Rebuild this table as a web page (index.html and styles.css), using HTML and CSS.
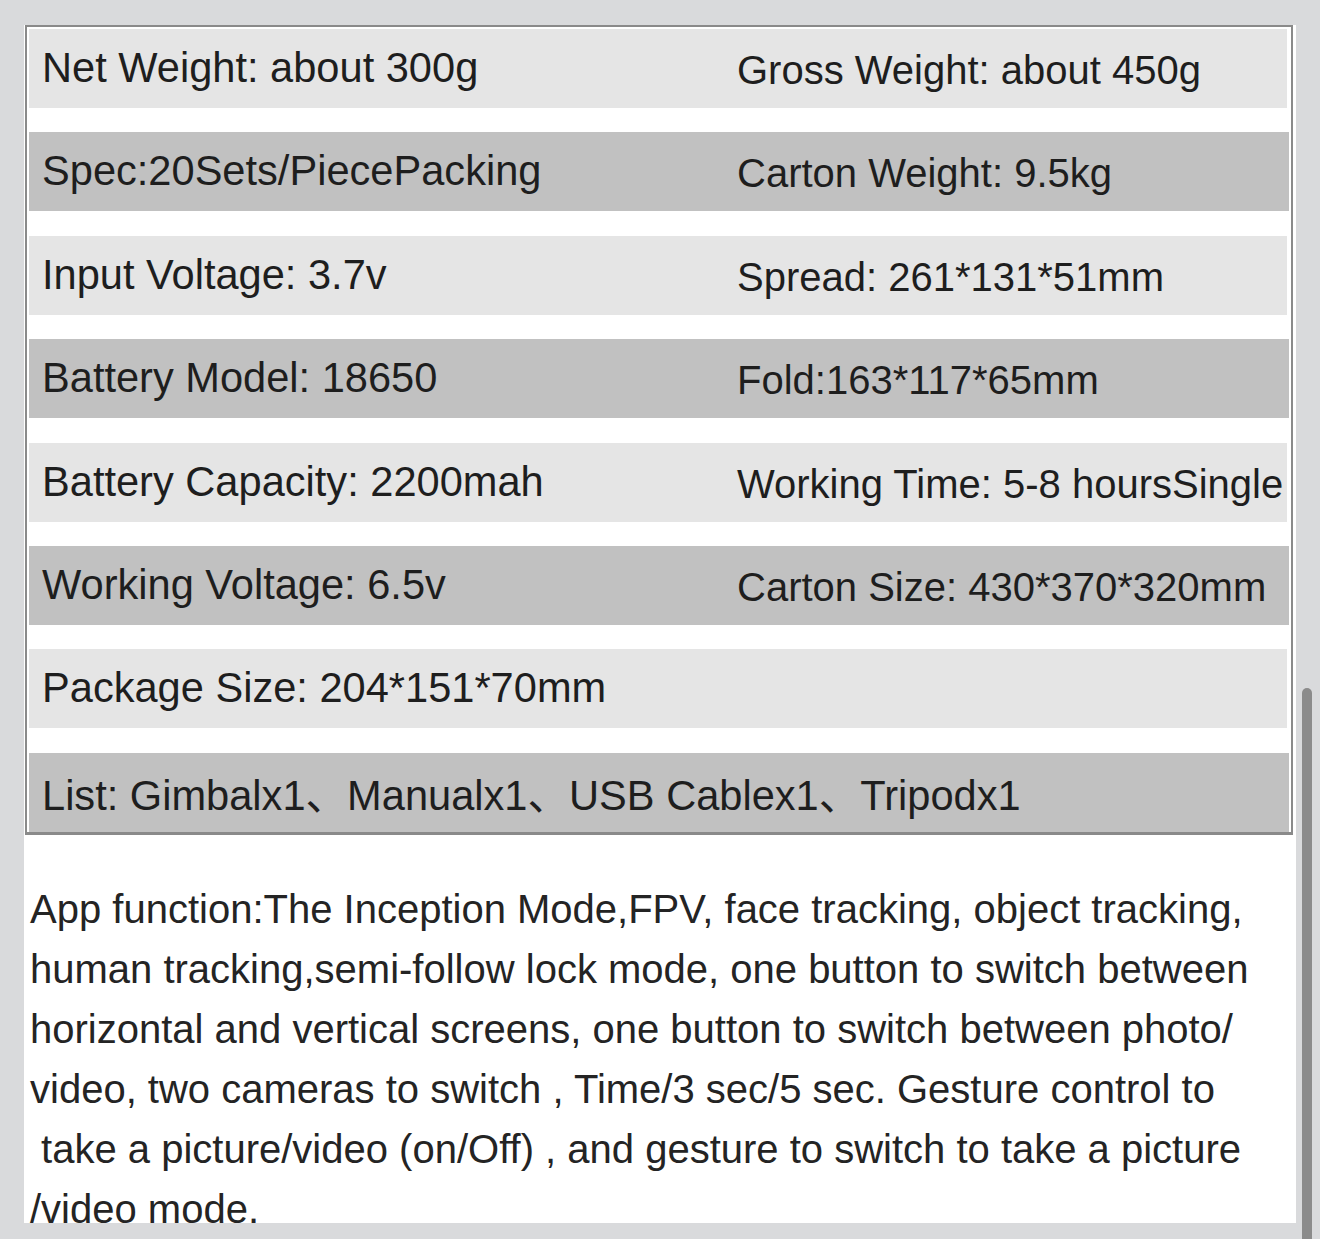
FILE: index.html
```html
<!DOCTYPE html>
<html lang="en">
<head>
<meta charset="utf-8">
<title>Specifications</title>
<link rel="stylesheet" href="styles.css">
</head>
<body>
<div class="page">
  <div class="card">
    <div class="spec-table">
      <div class="row light"><div class="cell c1">Net Weight: about 300g</div><div class="cell c2">Gross Weight: about 450g</div></div>
      <div class="row dark"><div class="cell c1">Spec:20Sets/PiecePacking</div><div class="cell c2">Carton Weight: 9.5kg</div></div>
      <div class="row light"><div class="cell c1">Input Voltage: 3.7v</div><div class="cell c2">Spread: 261*131*51mm</div></div>
      <div class="row dark"><div class="cell c1">Battery Model: 18650</div><div class="cell c2">Fold:163*117*65mm</div></div>
      <div class="row light"><div class="cell c1">Battery Capacity: 2200mah</div><div class="cell c2">Working Time: 5-8 hoursSingle</div></div>
      <div class="row dark"><div class="cell c1">Working Voltage: 6.5v</div><div class="cell c2">Carton Size: 430*370*320mm</div></div>
      <div class="row light"><div class="cell c1">Package Size: 204*151*70mm</div><div class="cell c2"></div></div>
      <div class="row dark"><div class="cell full">List: Gimbalx1、Manualx1、USB Cablex1、Tripodx1</div></div>
    </div>
    <p class="desc">App function:The Inception Mode,FPV, face tracking, object tracking,<br>human tracking,semi-follow lock mode, one button to switch between<br>horizontal and vertical screens, one button to switch between photo/<br>video, two cameras to switch , Time/3 sec/5 sec. Gesture control to<br>&nbsp;take a picture/video (on/Off) , and gesture to switch to take a picture<br>/video mode.</p>
  </div>
  <div class="scroll-thumb"></div>
</div>
</body>
</html>
```

FILE: styles.css
```css
html, body {
  margin: 0;
  padding: 0;
  background: #d9dadc;
}

body {
  font-family: "Liberation Sans", Arial, "Noto Sans CJK SC", sans-serif;
  color: #222;
}

.page {
  position: relative;
  width: 1320px;
  height: 1239px;
  overflow: hidden;
  padding-top: 25px;
  box-sizing: border-box;
}

.card {
  margin-left: 24px;
  width: 1272px;
  height: 1198px;
  background: #fff;
}

.spec-table {
  margin-left: 1px;
  width: 1268px;
  box-sizing: border-box;
  border: 2px solid #8a8a8a;
  border-bottom-width: 3px;
  padding: 2px 2px 0 2px;
  display: flex;
  flex-direction: column;
  gap: 24.4px;
}

.row {
  height: 79px;
  display: grid;
  grid-template-columns: 695px 1fr;
  align-items: center;
  font-size: 40px;
  color: #1e1e1e;
  white-space: nowrap;
}

.row.light { background: #e5e5e5; margin-right: 2px; }
.row.dark { background: #c1c1c1; margin-right: 0; }

.cell.c1 { padding-left: 13px; padding-bottom: 1px; font-size: 41.6px; }
.cell.c2 { padding-left: 13px; padding-top: 4px; }
.cell.full { grid-column: 1 / -1; padding-left: 13px; font-size: 41.6px; }

.desc {
  margin: 44px 0 0 0;
  padding-left: 6px;
  font-size: 40px;
  line-height: 60px;
  color: #242424;
  white-space: nowrap;
}

.scroll-thumb {
  position: absolute;
  left: 1302px;
  top: 688px;
  width: 10px;
  height: 600px;
  border-radius: 5px;
  background: #8b8b8b;
}
```
